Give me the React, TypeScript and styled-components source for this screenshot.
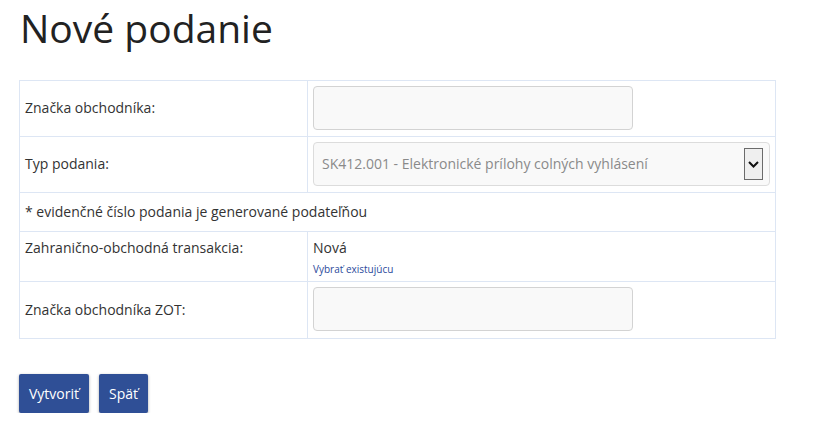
import styled, { createGlobalStyle } from 'styled-components';

const GlobalStyle = createGlobalStyle`
  html, body {
    margin: 0;
    padding: 0;
    background: #fff;
  }
  body {
    font-family: "Open Sans", "Liberation Sans", sans-serif;
    font-size: 14px;
    color: #333;
  }
`;

const Page = styled.div`
  padding: 6px 0 0 19px;
  width: 757px;
`;

const Title = styled.h1`
  margin: 0 0 30px 1px;
  font-size: 39px;
  line-height: 44px;
  font-weight: 400;
  color: #222;
`;

const FormTable = styled.table`
  width: 757px;
  border-collapse: collapse;
  border: 1px solid #dde6f4;
`;

const Row = styled.tr`
  border-bottom: 1px solid #dde6f4;
`;

const Label = styled.td<{ top?: boolean }>`
  width: 277px;
  padding: ${(p) => (p.top ? '5px' : '5px 5px 6px')};
  border-right: 1px solid #dde6f4;
  vertical-align: ${(p) => (p.top ? 'top' : 'middle')};
  line-height: 22px;
`;

const Value = styled.td<{ extra?: number }>`
  padding: 5px 5px ${(p) => 6 + (p.extra ?? 0)}px;
  vertical-align: top;
  line-height: 22px;
`;

const Note = styled.td`
  padding: 8px 5px;
  line-height: 22px;
`;

const TextInput = styled.input`
  display: block;
  box-sizing: border-box;
  width: 320px;
  height: 44px;
  margin: 0;
  border: 1px solid #d3d3d3;
  border-radius: 4px;
  background: #f9f9f9;
  font: inherit;
`;

const SelectBox = styled.div`
  box-sizing: border-box;
  width: 457px;
  height: 44px;
  display: flex;
  align-items: center;
  justify-content: space-between;
  padding: 0 6px 0 8px;
  border: 1px solid #dcdcdc;
  border-radius: 4px;
  background: #f9f9f9;
  color: #8a8a8a;
`;

const DropButton = styled.span`
  box-sizing: border-box;
  width: 19px;
  height: 32px;
  display: flex;
  align-items: center;
  justify-content: center;
  border: 1px solid #6b6b6b;
  background: #efefef;
`;

const Current = styled.div`
  line-height: 22px;
`;

const SmallLink = styled.a`
  display: block;
  margin-top: 3px;
  font-size: 10px;
  line-height: 14px;
  color: #2b4a9b;
  text-decoration: none;
`;

const Actions = styled.div`
  display: flex;
  gap: 10px;
  margin-top: 35px;
`;

const Button = styled.button`
  height: 39px;
  padding: 0 10px;
  border: none;
  border-radius: 2px;
  background: #2f4f96;
  color: #fff;
  font-family: "Open Sans", "Liberation Sans", sans-serif;
  font-size: 14px;
  box-shadow: 0 1px 3px rgba(0, 0, 0, 0.35);
`;

const Chevron = () => (
  <svg width="11" height="7" viewBox="0 0 11 7">
    <path d="M1 1l4.5 4.5L10 1" fill="none" stroke="#111" strokeWidth="2" />
  </svg>
);

export default function App() {
  return (
    <>
      <GlobalStyle />
      <Page>
        <Title>Nové podanie</Title>
        <FormTable>
          <tbody>
            <Row>
              <Label>Značka obchodníka:</Label>
              <Value>
                <TextInput />
              </Value>
            </Row>
            <Row>
              <Label>Typ podania:</Label>
              <Value>
                <SelectBox>
                  <span>SK412.001 - Elektronické prílohy colných vyhlásení</span>
                  <DropButton>
                    <Chevron />
                  </DropButton>
                </SelectBox>
              </Value>
            </Row>
            <Row>
              <Note colSpan={2}>* evidenčné číslo podania je generované podateľňou</Note>
            </Row>
            <Row>
              <Label top>Zahranično-obchodná transakcia:</Label>
              <Value extra={-1}>
                <Current>Nová</Current>
                <SmallLink href="#">Vybrať existujúcu</SmallLink>
              </Value>
            </Row>
            <Row>
              <Label>Značka obchodníka ZOT:</Label>
              <Value extra={1}>
                <TextInput />
              </Value>
            </Row>
          </tbody>
        </FormTable>
        <Actions>
          <Button>Vytvoriť</Button>
          <Button>Späť</Button>
        </Actions>
      </Page>
    </>
  );
}
